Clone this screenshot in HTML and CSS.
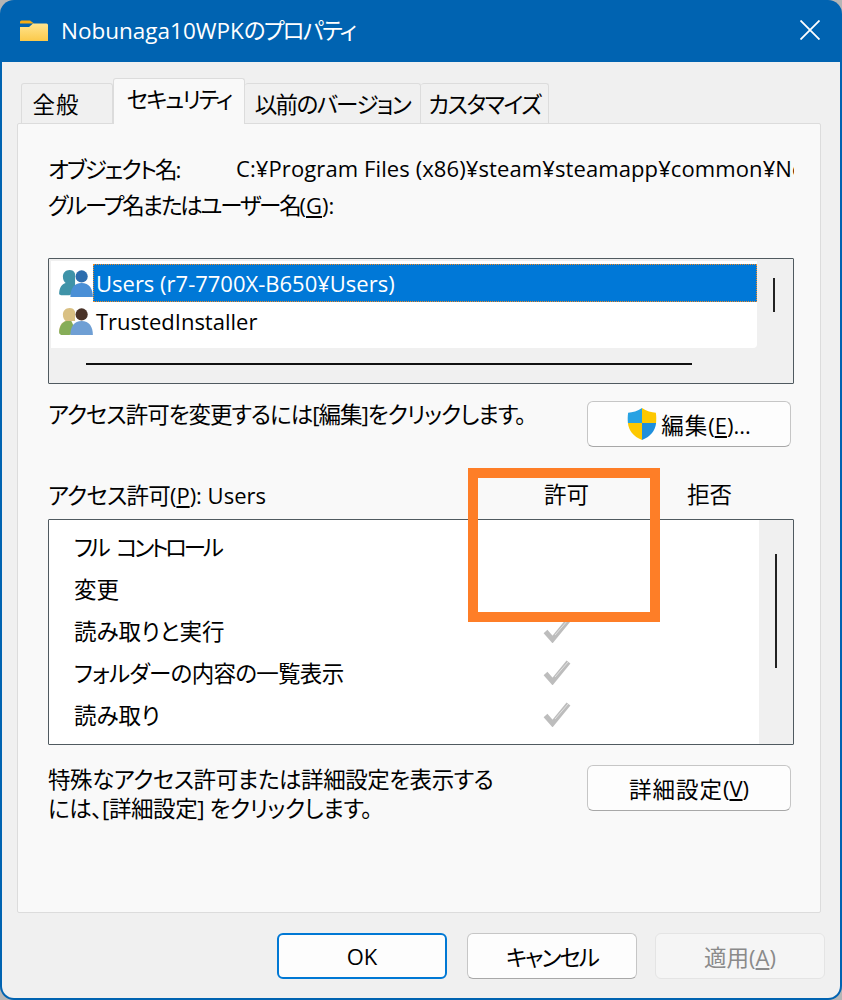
FILE: index.html
```html
<!DOCTYPE html>
<html lang="ja">
<head>
    <meta charset="UTF-8">
    <title>Nobunaga10WPKのプロパティ</title>
    <link rel="stylesheet" href="styles.css">
</head>
<body>
    <svg class="defs" width="0" height="0">
        <defs>
            <linearGradient id="folderFill" x1="0" y1="0" x2="0" y2="1">
                <stop offset="0" stop-color="#ffe58f"/>
                <stop offset="1" stop-color="#fbc94a"/>
            </linearGradient>
            <symbol id="check" viewBox="0 0 28 26">
                <path d="M2.500 14.500 9.500 22.500 25.500 3" fill="none" stroke="#bdbdbd" stroke-width="5"/>
                <path d="M12 18 25 3" fill="none" stroke="#e2e2e2" stroke-width="1"/>
            </symbol>
        </defs>
    </svg>
    <div class="window">
        <div class="titlebar">
            <svg class="folder-icon" width="28" height="22" viewBox="0 0 28 22">
                <path d="M0 2A1.500 1.500 0 0 1 1.500.5H10l4 3H0z" fill="#f5ad14"/>
                <path d="M0 7h9l4-3.500h13.500A1.500 1.500 0 0 1 28 5v16H0z" fill="url(#folderFill)"/>
            </svg>
            <span class="title">Nobunaga10WPK<span class="title-kana">のプロパティ</span></span>
            <svg class="close-icon" width="20" height="20" viewBox="0 0 20 20">
                <path d="M.5.5l19 19M19.500.5l-19 19" stroke="#fff" stroke-width="1.800" fill="none"/>
            </svg>
        </div>

        <div class="content">
            <div class="tabs">
                <div class="tab tab-general">全般</div>
                <div class="tab tab-active">セキュリティ</div>
                <div class="tab tab-prev">以前のバージョン</div>
                <div class="tab tab-custom">カスタマイズ</div>
            </div>

            <div class="panel">
                <div class="object-row">
                    <span class="object-label">オブジェクト名:</span>
                    <span class="object-path">C:¥Program Files (x86)¥steam¥steamapp¥common¥Nobunaga10WPK</span>
                </div>
                <div class="group-label">グループ名またはユーザー名<span class="lat">(<u>G</u>):</span></div>

                <div class="user-box">
                    <div class="user-main">
                        <div class="user-list">
                            <div class="user-row">
                                <svg class="user-icon" width="36" height="32" viewBox="0 0 36 32">
                                    <path d="M0 28c0-7 3-11 7-12-2-2-3-4-3-7 0-4 3-7 7-7 3 0 5 1 6 4v20l-6 3H2z" fill="#3f93a8"/>
                                    <circle cx="24" cy="9" r="6.500" fill="#2d6dae"/>
                                    <path d="M12 31c0-9 4-15 12-15s12 6 12 15z" fill="#4a8fd6"/>
                                </svg>
                                <div class="user-name selected">Users (r7-7700X-B650¥Users)</div>
                            </div>
                            <div class="user-row">
                                <svg class="user-icon" width="36" height="32" viewBox="0 0 36 32">
                                    <path d="M0 28c0-7 3-11 7-12-2-2-3-4-3-7 0-4 3-7 7-7 3 0 5 1 6 4v10h-6v12H2z" fill="#d9c083"/>
                                    <path d="M0 29c0-7 3-12 8-13h5l3 6v7l-5 2H2z" fill="#86ad58"/>
                                    <circle cx="24" cy="9" r="6.500" fill="#4a3328"/>
                                    <path d="M12 31c0-9 4-15 12-15s12 6 12 15z" fill="#6f9fd4"/>
                                </svg>
                                <div class="user-name">TrustedInstaller</div>
                            </div>
                        </div>
                        <div class="hscroll"><div class="hscroll-thumb"></div></div>
                    </div>
                    <div class="vscroll vscroll-users"><div class="vscroll-thumb"></div></div>
                </div>

                <div class="edit-row">
                    <span class="edit-text">アクセス許可を変更するには[編集]をクリックします。</span>
                    <button class="btn btn-edit">
                        <svg class="shield-icon" width="30" height="32" viewBox="0 0 28 30">
                            <path d="M14 0C10 3 5 4 1 4.500 .5 8 .5 11 .8 14H14z" fill="#27a2e3"/>
                            <path d="M14 0c4 3 9 4 13 4.500.5 3.500.5 6.500.2 9.500H14z" fill="#fdc800"/>
                            <path d="M.8 14c.7 7 5 12.500 13.200 16V14z" fill="#fdc800"/>
                            <path d="M27.200 14c-.7 7-5 12.500-13.200 16V14z" fill="#1f8fdc"/>
                        </svg>
                        <span>編集<span class="lat">(<u>E</u>)...</span></span>
                    </button>
                </div>

                <div class="perm-head">
                    <span class="perm-title">アクセス許可<span class="lat">(<u>P</u>): Users</span></span>
                    <span class="perm-allow">許可</span>
                    <span class="perm-deny">拒否</span>
                </div>

                <div class="perm-box">
                    <div class="perm-list">
                        <div class="perm-row"><span class="perm-name perm-name-full">フル コントロール</span></div>
                        <div class="perm-row"><span class="perm-name">変更</span></div>
                        <div class="perm-row"><span class="perm-name">読み取りと実行</span><svg class="check"><use href="#check"/></svg></div>
                        <div class="perm-row"><span class="perm-name perm-name-list">フォルダーの内容の一覧表示</span><svg class="check"><use href="#check"/></svg></div>
                        <div class="perm-row"><span class="perm-name">読み取り</span><svg class="check"><use href="#check"/></svg></div>
                    </div>
                    <div class="vscroll vscroll-perm"><div class="vscroll-thumb"></div></div>
                </div>

                <div class="advanced-row">
                    <p class="advanced-text">特殊なアクセス許可または詳細設定を表示する<br>には、[詳細設定] をクリックします。</p>
                    <button class="btn btn-advanced">詳細設定<span class="lat">(<u>V</u>)</span></button>
                </div>
            </div>

            <div class="footer">
                <button class="btn btn-foot btn-ok"><span class="lat">OK</span></button>
                <button class="btn btn-foot btn-cancel">キャンセル</button>
                <button class="btn btn-foot btn-disabled">適用<span class="lat">(<u>A</u>)</span></button>
            </div>
        </div>

        <!-- annotation drawn over the dialog -->
        <div class="highlight"></div>
    </div>
</body>
</html>
```

FILE: styles.css
```css
* {
    margin: 0;
    padding: 0;
    box-sizing: border-box;
}

body {
    width: 842px;
    height: 1000px;
    overflow: hidden;
    background-color: #b5b5b5;
    font-family: 'Open Sans', 'Noto Sans CJK JP', sans-serif;
    font-size: 22.5px;
    font-feature-settings: "palt";
    color: #000;
}

.lat {
    font-size: 22px;
    letter-spacing: 0;
}

.defs {
    position: absolute;
}

.window {
    position: relative;
    width: 842px;
    height: 1000px;
    padding: 0 2px 2px;
    background-color: #0063b1;
    border-radius: 14px;
    overflow: hidden;
}

.titlebar {
    height: 62px;
    display: flex;
    align-items: center;
    padding: 0 20px 0 18px;
    color: #fff;
}

.folder-icon {
    margin-right: 13px;
}

.title {
    font-size: 22.5px;
    flex: 1;
    padding-bottom: 4px;
    white-space: nowrap;
}

.title-kana {
    letter-spacing: -1.8px;
}

.close-icon {
    margin-bottom: 2px;
}

.content {
    height: 936px;
    background-color: #f0f0f0;
    padding: 16px 19px 0 15px;
    border-bottom-left-radius: 12px;
    border-bottom-right-radius: 12px;
}

/* Tabs */
.tabs {
    display: flex;
    align-items: flex-end;
    height: 45px;
    padding-left: 4px;
}

.tab {
    height: 40px;
    display: flex;
    align-items: center;
    justify-content: center;
    background-color: #f0f0f0;
    border: 1px solid #dcdcdc;
    border-bottom: none;
    border-left: none;
    border-radius: 3px 3px 0 0;
    white-space: nowrap;
}

.tab-general {
    width: 92px;
    border-left: 1px solid #dcdcdc;
    padding-right: 22px;
    letter-spacing: 1px;
}

.tab-active {
    width: 132px;
    height: 46px;
    background-color: #f9f9f9;
    border-left: 1px solid #dcdcdc;
    position: relative;
    z-index: 1;
    margin-bottom: -1px;
    padding-bottom: 6px;
    letter-spacing: -2px;
}

.tab-prev {
    width: 176px;
    letter-spacing: -1.6px;
}

.tab-custom {
    width: 128px;
    letter-spacing: -1.4px;
}

/* Panel */
.panel {
    height: 790px;
    background-color: #f9f9f9;
    border: 1px solid #dcdcdc;
    border-radius: 2px;
    padding: 26px 26px 0 30px;
}

.object-row {
    display: flex;
    height: 36px;
    align-items: center;
    white-space: nowrap;
    overflow: hidden;
}

.object-label {
    width: 188px;
    flex-shrink: 0;
    letter-spacing: -1.9px;
}

.object-path {
    font-size: 22px;
    letter-spacing: 0.1px;
}

.group-label {
    height: 38px;
    line-height: 38px;
    letter-spacing: -2.2px;
}

/* User list */
.user-box {
    display: flex;
    height: 126px;
    margin-top: 34px;
    background-color: #f0f0f0;
    border: 1px solid #505a60;
    border-radius: 1px;
    padding: 2px;
}

.user-main {
    flex: 1;
    display: flex;
    flex-direction: column;
    min-width: 0;
}

.user-list {
    height: 87px;
    background-color: #fff;
    border-radius: 0 0 4px 0;
    padding-top: 3px;
}

.user-row {
    height: 38px;
    display: flex;
    align-items: center;
    padding-left: 8px;
}

.user-icon {
    width: 34px;
    height: 30px;
    flex-shrink: 0;
}

.user-name {
    flex: 1;
    height: 38px;
    line-height: 38px;
    font-size: 22px;
    padding-left: 3px;
    white-space: nowrap;
}

.selected {
    background-color: #0078d7;
    color: #fff;
    outline: 1px dotted #f08a24;
    outline-offset: -1px;
}

.hscroll {
    flex: 1;
    padding: 15px 65px 0 35px;
}

.hscroll-thumb {
    height: 2px;
    background-color: #111;
}

.vscroll {
    background-color: #f0f0f0;
    display: flex;
    justify-content: center;
}

.vscroll-users {
    width: 34px;
    padding-top: 17px;
}

.vscroll-users .vscroll-thumb {
    height: 34px;
}

.vscroll-thumb {
    width: 2px;
    background-color: #222;
}

/* Edit row */
.edit-row {
    display: flex;
    justify-content: space-between;
    align-items: flex-start;
    height: 46px;
    margin-top: 17px;
    line-height: 28px;
}

.edit-text {
    white-space: nowrap;
    letter-spacing: -1px;
}

.btn {
    font-family: inherit;
    font-size: 22.5px;
    font-feature-settings: inherit;
    color: #000;
    background-color: #fdfdfd;
    border: 1px solid #c6c6c6;
    border-bottom-color: #a8a8a8;
    border-radius: 6px;
}

.btn-edit,
.btn-advanced {
    width: 204px;
    height: 46px;
    margin-right: 3px;
    display: flex;
    align-items: center;
    justify-content: center;
    letter-spacing: 1px;
}

.shield-icon {
    margin-right: 4px;
}

/* Permissions */
.perm-head {
    display: flex;
    height: 40px;
    margin-top: 28px;
    align-items: flex-start;
    line-height: 40px;
}

.perm-title {
    width: 496px;
    letter-spacing: -0.8px;
}

.perm-allow {
    width: 143px;
}

.perm-box {
    display: flex;
    height: 226px;
    margin-top: 4px;
    background-color: #fff;
    border: 1px solid #505a60;
    border-radius: 1px;
}

.perm-list {
    flex: 1;
    padding-top: 5px;
}

.perm-row {
    height: 42px;
    display: flex;
    align-items: center;
    padding-left: 25px;
}

.perm-name {
    width: 469px;
    white-space: nowrap;
}

.perm-name-full {
    letter-spacing: -3.2px;
    word-spacing: 6px;
}

.perm-name-list {
    letter-spacing: -0.7px;
}

.check {
    width: 28px;
    height: 26px;
}

.vscroll-perm {
    width: 34px;
    padding-top: 34px;
}

.vscroll-perm .vscroll-thumb {
    height: 114px;
}

/* Advanced row */
.advanced-row {
    display: flex;
    justify-content: space-between;
    align-items: flex-start;
    margin-top: 20px;
}

.advanced-text {
    line-height: 29px;
    white-space: nowrap;
    letter-spacing: -0.45px;
}

/* Footer */
.footer {
    display: flex;
    justify-content: flex-end;
    gap: 20px;
    margin-top: 20px;
    margin-right: -4px;
}

.btn-foot {
    width: 170px;
    height: 46px;
}

.btn-ok {
    border: 2px solid #0078d4;
}

.btn-cancel {
    letter-spacing: -2px;
}

.btn-disabled {
    margin-left: -2px;
    color: #8a8a8a;
    background-color: #f5f5f5;
    border-color: #e4e4e4;
}

/* Orange annotation box */
.highlight {
    position: absolute;
    left: 468px;
    top: 468px;
    width: 192px;
    height: 154px;
    border: 10px solid #fe7e27;
}
```
